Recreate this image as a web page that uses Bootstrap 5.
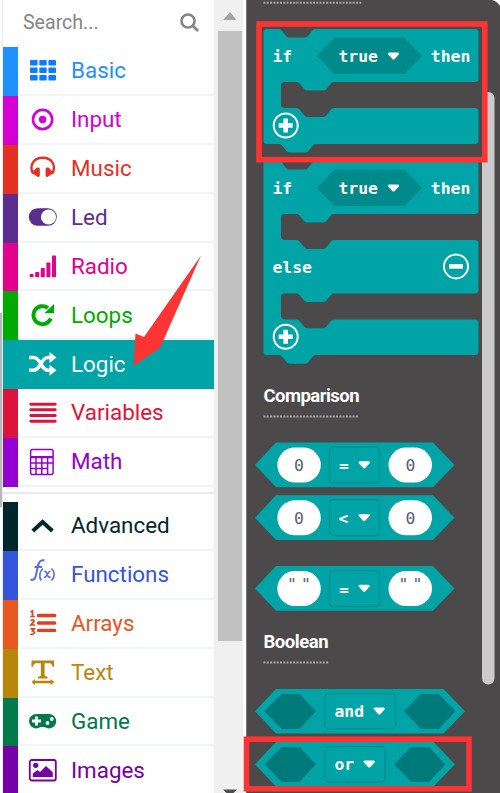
<!DOCTYPE html>
<html lang="en">
<head>
<meta charset="utf-8">
<meta name="viewport" content="width=device-width, initial-scale=1">
<title>Block editor toolbox</title>
<link href="https://cdn.jsdelivr.net/npm/bootstrap@5.3.0/dist/css/bootstrap.min.css" rel="stylesheet">
<style>
body{font-family:Roboto,sans-serif;background:#fff}
.editor{width:500px;height:793px}
.gutter{width:3px;background:#fbfcfc;border-right:1px solid #e6eeee}
.gutter i{display:block;width:2px;height:194px;margin-top:313px;background:#b4b9ba}
.toolbox{width:211px}
.searchbar{height:47px;padding:0 15px 3px 20px;color:#858585;font-size:20.6px}
.searchbar span{transform:scaleX(.95);transform-origin:0 50%}
.cat{height:48.9px;color:var(--c)}
.cat::before{content:"";width:15px;background:var(--c);align-self:stretch}
.cat .rowbody{border-bottom:2px solid #f0f4f5;margin-left:2px;height:100%}
.cat svg{width:30px;height:30px;margin-left:7px;overflow:visible}
.cat span{font-size:22.4px;line-height:1;margin-left:14px;white-space:nowrap}
.cat.selected{background:var(--c);color:#fff}
.cat.selected .rowbody{border-color:var(--c)}
.divide{height:15px;border-bottom:0}
.divide::before{content:"";display:block;height:2px;margin-top:5px;background:#e9ebeb}
.scroll{width:32px;background:#f0f0f0;padding-left:3.5px;border-right:3px solid #fff}
.thumb{width:24px;height:610px;background:#c1c1c1}
.flyout{width:254px;background:#4b4949;border-left:1px solid #777;overflow:hidden}
.flyout svg{display:block;margin-left:-1px;width:254px;flex:none}
.flyout text{font:bold 16.4px "DejaVu Sans Mono",monospace;fill:#fff}
.flyout text.num{font-weight:400;fill:#575e75}
.flyout text.label{font:bold 18.5px Roboto,sans-serif}
.b{fill:#00a4a6}.dk{fill:#008a8b}.slot{fill:#00797b}.w{fill:#fff}
.fld{fill:#00a4a6;stroke:#008f91;stroke-width:1.5}
.ring{fill:none;stroke:#fff;stroke-width:2}
.dots{stroke:#a9a9a9;stroke-width:2;stroke-dasharray:2 1.3}
.overlay{left:0;top:0;pointer-events:none}
</style>
<script src="https://cdn.jsdelivr.net/npm/bootstrap@5.3.0/dist/js/bootstrap.bundle.min.js"></script>
<style>
.c-basic{--c:#1e90ff}.c-input{--c:#d400d4}.c-music{--c:#e63022}.c-led{--c:#5c2d91}.c-radio{--c:#e3008c}.c-loops{--c:#00aa00}.c-logic{--c:#00a4a6}.c-vars{--c:#dc143c}.c-math{--c:#9400d3}.c-adv{--c:#00272b}.c-fn{--c:#3455db}.c-arr{--c:#e65722}.c-text{--c:#b8860b}.c-game{--c:#007a4b}.c-img{--c:#7600a8}
</style>
</head>
<body>
<div class="editor d-flex position-relative overflow-hidden">
<div class="gutter flex-shrink-0"><i></i></div>
<nav class="toolbox flex-shrink-0 d-flex flex-column">
<div class="searchbar d-flex align-items-center justify-content-between flex-shrink-0"><span>Search...</span>
<svg width="19" height="19" viewBox="0 0 19 19" fill="none" stroke="#858585" stroke-width="2.6"><circle cx="8" cy="8" r="6.5"/><path d="M12.5 12.5L18 18"/></svg></div>

<div class="cat c-basic d-flex flex-shrink-0"><div class="rowbody d-flex align-items-center flex-grow-1"><svg viewBox="0 0 30 30" fill="#0a7cff"><g id="r"><rect x="3" y="5" width="7.6" height="5.6" rx="1"/><rect x="12.3" y="5" width="7.4" height="5.6" rx="1"/><rect x="21.4" y="5" width="7.6" height="5.6" rx="1"/></g><use href="#r" y="7.5"/><use href="#r" y="15"/></svg><span>Basic</span></div></div>

<div class="cat c-input d-flex flex-shrink-0"><div class="rowbody d-flex align-items-center flex-grow-1"><svg viewBox="0 0 30 30" fill="currentColor"><circle cx="15.6" cy="15.5" r="9.6" fill="none" stroke="currentColor" stroke-width="2.6"/><circle cx="15.6" cy="15.5" r="3.7"/></svg><span>Input</span></div></div>

<div class="cat c-music d-flex flex-shrink-0"><div class="rowbody d-flex align-items-center flex-grow-1"><svg viewBox="0 0 30 30" fill="currentColor"><path d="M6 20.5C2.3 13.500 5.500 4.700 15.700 4.700S29 13.500 25.400 20.500" fill="none" stroke="currentColor" stroke-width="2.400"/><path d="M4.800 20L9.500 14.800Q12.800 14 12.800 16V22.500Q12.800 24.500 10.500 23.800ZM26.600 20L21.900 14.800Q18.600 14 18.600 16V22.500Q18.600 24.500 20.900 23.800Z"/></svg><span>Music</span></div></div>

<div class="cat c-led d-flex flex-shrink-0"><div class="rowbody d-flex align-items-center flex-grow-1"><svg viewBox="0 0 30 30"><rect x="1.800" y="6.200" width="28" height="17.600" rx="8.800" fill="currentColor"/><circle cx="21.500" cy="15" r="7.600" fill="#fff"/></svg><span>Led</span></div></div>

<div class="cat c-radio d-flex flex-shrink-0"><div class="rowbody d-flex align-items-center flex-grow-1"><svg viewBox="0 0 30 30" fill="currentColor"><rect x="2.600" y="23" width="4" height="3.200" rx="1"/><rect x="8.200" y="21" width="4" height="5.200" rx=".7"/><rect x="13.800" y="17" width="4" height="9.200" rx=".7"/><rect x="19.400" y="11.500" width="4" height="14.700" rx=".7"/><rect x="25" y="4.500" width="4" height="21.700" rx=".7"/></svg><span>Radio</span></div></div>

<div class="cat c-loops d-flex flex-shrink-0"><div class="rowbody d-flex align-items-center flex-grow-1"><svg viewBox="0 0 30 30"><path d="M23.800 18.500A9 9 0 1 1 21 8" fill="none" stroke="currentColor" stroke-width="3.900"/><path d="M27 4V13.200H17.300Z" fill="currentColor"/></svg><span>Loops</span></div></div>

<div class="cat c-logic selected d-flex flex-shrink-0"><div class="rowbody d-flex align-items-center flex-grow-1"><svg viewBox="0 0 30 30"><path d="M2 8.500H6.500C14 8.500 13.500 21.300 21 21.300H24M2 21.300H6.500C14 21.300 13.500 8.500 21 8.500H24" fill="none" stroke="#fff" stroke-width="3.600"/><path d="M22.500 3V14L29.500 8.500ZM22.500 15.800V26.800L29.500 21.300Z" fill="#fff"/></svg><span>Logic</span></div></div>

<div class="cat c-vars d-flex flex-shrink-0"><div class="rowbody d-flex align-items-center flex-grow-1"><svg viewBox="0 0 30 30"><path d="M3.800 6.200H28.200M3.800 11.800H28.200M3.800 17.500H28.200M3.800 23.200H28.200" stroke="currentColor" stroke-width="2.900" stroke-linecap="round"/></svg><span>Variables</span></div></div>

<div class="cat c-math d-flex flex-shrink-0"><div class="rowbody d-flex align-items-center flex-grow-1"><svg viewBox="0 0 30 30"><g fill="none" stroke="currentColor" stroke-width="1.500"><rect x="3.600" y="2.500" width="22.500" height="25" rx="2"/><path d="M4 10.500H26M4 16H26M4 21.500H21M9 10.500V27M14.800 10.500V27M20.600 10.500V27"/><path d="M4 10H26" stroke-width="2"/></g></svg><span>Math</span></div></div>

<div class="divide flex-shrink-0 d-flex flex-column"></div>

<div class="cat c-adv d-flex flex-shrink-0"><div class="rowbody d-flex align-items-center flex-grow-1"><svg viewBox="0 0 30 30"><path d="M5.800 21L15.600 12L25.400 21" fill="none" stroke="currentColor" stroke-width="4"/></svg><span>Advanced</span></div></div>

<div class="cat c-fn d-flex flex-shrink-0"><div class="rowbody d-flex align-items-center flex-grow-1"><svg viewBox="0 0 30 30" fill="none" stroke="#5570dc" stroke-width="1.600"><path d="M3.500 20.500C8.500 22.500 9 16 10.500 9Q12-.5 17.500 1.500M7.500 8H15" stroke-width="2"/><path d="M16 9.500Q10.500 15 14.200 21.500M24.500 9.500Q30 15 24.500 21.500M17.300 12.500C20.500 11 19.500 19.500 23.500 18M23.500 12C20.500 12 20 19 16.800 18.500"/></svg><span>Functions</span></div></div>

<div class="cat c-arr d-flex flex-shrink-0"><div class="rowbody d-flex align-items-center flex-grow-1"><svg viewBox="0 0 30 30"><g fill="none" stroke="#e0401a"><path d="M11.500 7.500H27.700M11.500 15H27.700M11.500 22.400H27.700" stroke-width="3.400" stroke-linecap="round"/><path d="M3.500 4L5.500 3V8.500M3.300 8.500H7.800M3.500 12.500Q7.500 11 7 13.500L3.800 17H8M3.500 20.800H7.300L5.500 23Q8 23.500 7 25.500Q5.500 27 3.300 26" stroke-width="1.700"/></g></svg><span>Arrays</span></div></div>

<div class="cat c-text d-flex flex-shrink-0"><div class="rowbody d-flex align-items-center flex-grow-1"><svg viewBox="0 0 30 30" fill="currentColor"><path d="M4.500 3.500H27V9.800H25.500Q25 6.500 22.500 6.300H17.600V18.300Q17.700 19.700 20.500 19.800V21.500H11V19.800Q13.800 19.700 13.900 18.300V6.300H9Q6.500 6.500 6 9.800H4.500Z"/><path d="M8 23.800H23.500V22L27.500 25L23.500 28V26.200H8V28L4.500 25L8 22Z"/></svg><span>Text</span></div></div>

<div class="cat c-game d-flex flex-shrink-0"><div class="rowbody d-flex align-items-center flex-grow-1"><svg viewBox="0 0 30 30"><path d="M9.500 8H22A7.200 7.200 0 1 1 17.700 21H13.500A7.200 7.200 0 1 1 9.500 8Z" fill="currentColor"/><path d="M5 15H14M9.500 10.500V19.500" stroke="#fff" stroke-width="2.800"/><circle cx="20.500" cy="17" r="1.900" fill="#fff"/><circle cx="24.800" cy="13" r="1.900" fill="#fff"/></svg><span>Game</span></div></div>

<div class="cat c-img d-flex flex-shrink-0"><div class="rowbody d-flex align-items-center flex-grow-1"><svg viewBox="0 0 30 30" fill="currentColor"><rect x="2.800" y="5" width="26" height="20.500" rx="2" fill="none" stroke="currentColor" stroke-width="1.800"/><circle cx="8.700" cy="10.300" r="2.600"/><path d="M5.800 22V18.500L10.500 15L13 17L19 11L25.800 17.500V22Z"/></svg><span>Images</span></div></div>
</nav>

<div class="scroll flex-shrink-0 d-flex flex-column">
<svg class="flex-shrink-0" width="24" height="31" viewBox="0 0 24 31"><path d="M5 20L12 12L18.500 20Z" fill="#a3a3a3"/></svg>
<div class="thumb flex-shrink-0"></div>
<svg class="mt-auto flex-shrink-0" width="24" height="4" viewBox="0 0 24 4"><path d="M5 .5H19L15.500 4H8.500Z" fill="#505050"/></svg>
</div>

<section class="flyout flex-shrink-0 d-flex flex-column">
<svg height="28" viewBox="246 0 254 28"><path class="dots" d="M263.500 2.700H362"/><path d="M492 0Q497 1 500 6V0Z" fill="#fff"/></svg>

<svg height="132" viewBox="246 28 254 132">
<path class="b" d="M267 29H279.500Q281.500 29.500 283 32L286 36Q287.500 37.500 289 37.500H304.500Q306.500 37.500 308 36L312 31Q313.500 29 315.500 29H475Q478.500 29 478.500 32.500V78.500Q478.500 82 475 82H334Q332 82 330.500 84L326.500 89Q325 90.500 323 90.500H307.500Q305.500 90.500 304 89L300 84Q298.500 82 296.500 82H285Q281 82 281 86V104Q281 108 285 108H296.500Q298.500 108 300 110L304 115Q305.500 117 307.500 117H323Q325 117 326.500 115L330.500 110Q332 108 334 108H475Q478.500 108 478.500 111.500V140.500Q478.500 144 475 144H316Q314 144 312.500 146L308.500 151Q307 152.500 305 152.500H290Q288 152.500 286.500 151L282.500 146Q281 144 279 144H267Q263.500 144 263.500 140.500V32.500Q263.500 29 267 29Z"/>
<path class="dk" d="M316.500 56L334.500 37.500H404.500L422.500 56L404.500 74H334.500Z"/>
<text x="272.500" y="62">if</text><text x="338.500" y="62">true</text><text x="430.800" y="62">then</text>
<path id="tri" class="w" d="M389 52.500H398Q400 53 398.800 54.500L394.500 59.200Q393.500 60 392.500 59.200L388.200 54.500Q387 53 389 52.500Z"/>
<g id="plus"><circle class="ring" cx="285.700" cy="125.500" r="12"/><path d="M278.700 125.500H292.700M285.700 118.500V132.500" stroke="#fff" stroke-width="4.600"/></g>
</svg>

<svg height="220" viewBox="246 160 254 220">
<path class="b" d="M267 161H279.500Q281.500 161.500 283 164L286 168Q287.500 169.500 289 169.500H304.500Q306.500 169.500 308 168L312 163Q313.500 161 315.500 161H475Q478.500 161 478.500 164.500V210.500Q478.500 214 475 214H334Q332 214 330.500 216L326.500 221Q325 222.500 323 222.500H307.500Q305.500 222.500 304 221L300 216Q298.500 214 296.500 214H285Q281 214 281 218V236Q281 240 285 240H296.500Q298.500 240 300 242L304 247Q305.500 249 307.500 249H323Q325 249 326.500 247L330.500 242Q332 240 334 240H475Q478.500 240 478.500 243.500V290Q478.500 293.500 475 293.500H334Q332 293.500 330.500 295.500L326.500 300.500Q325 302 323 302H307.500Q305.500 302 304 300.500L300 295.500Q298.500 293.500 296.500 293.500H285Q281 293.500 281 297.500V315.500Q281 319.500 285 319.500H296.500Q298.500 319.500 300 321.500L304 326.500Q305.500 328.300 307.500 328.300H323Q325 328.300 326.500 326.500L330.500 321.500Q332 319.500 334 319.500H475Q478.500 319.500 478.500 323V351.500Q478.500 355 475 355H316Q314 355 312.500 357L308.500 362Q307 363.700 305 363.700H290Q288 363.700 286.500 362L282.500 357Q281 355 279 355H267Q263.500 355 263.500 351.500V164.500Q263.500 161 267 161Z"/>
<path class="dk" d="M316.500 188L334.500 169.500H404.500L422.500 188L404.500 206H334.500Z"/>
<text x="272.500" y="194">if</text><text x="338.500" y="194">true</text><text x="430.800" y="194">then</text><text x="272.500" y="273">else</text>
<use href="#tri" y="132"/><use href="#plus" y="211.300"/>
<circle class="ring" cx="456" cy="266.400" r="12"/><path d="M449 266.400H463" stroke="#fff" stroke-width="4.600"/>
</svg>

<svg height="60" viewBox="246 380 254 60"><text class="label" x="263.500" y="402" textLength="96">Comparison</text><path class="dots" d="M263.500 416.500H359"/></svg>

<svg height="52" viewBox="246 440 254 52">
<g id="cmp"><path class="b" d="M255 465L276 442.500H433L454.500 465L433 487.300H276Z"/><rect class="w" x="277.300" y="447.500" width="43.500" height="35" rx="17.500"/><rect class="w" x="388.500" y="447.500" width="43.500" height="35" rx="17.500"/><rect class="fld" x="329.500" y="447" width="50" height="36" rx="4"/><use href="#tri" x="-29.300" y="408.800"/></g>
<text class="num" x="294" y="470.500">0</text><text class="num" x="405.500" y="470.500">0</text><text x="339" y="471">=</text>
</svg>
<svg height="58" viewBox="246 492 254 58"><use href="#cmp" y="52.800"/><text class="num" x="294" y="523.500">0</text><text class="num" x="405.500" y="523.500">0</text><text x="338.500" y="524">&lt;</text></svg>
<svg height="70" viewBox="246 550 254 70"><use href="#cmp" y="123.500"/><text class="num" x="287" y="590">"</text><text class="num" x="301" y="590">"</text><text class="num" x="398.500" y="590">"</text><text class="num" x="412.500" y="590">"</text><text x="339" y="594.500">=</text></svg>

<svg height="60" viewBox="246 620 254 60"><text class="label" x="263.500" y="647.500" textLength="65">Boolean</text><path class="dots" d="M263.500 662.500H328.500"/></svg>

<svg height="58" viewBox="246 680 254 58"><path class="b" d="M255 711.300L276 689H443.500L465 711.300L443.500 733.500H276Z"/><path id="hx" class="slot" d="M264.500 711.300L281.500 694H299.500L316 711.300L299.500 729H281.500Z"/><use href="#hx" x="139.500"/><rect class="fld" x="325" y="693.500" width="70.500" height="35.500" rx="4"/><text x="334.500" y="716.500">and</text><use href="#tri" x="-14.300" y="655"/></svg>
<svg height="55" viewBox="246 738 254 55"><path class="b" d="M255 764.300L276 742H433.500L455 764.300L433.500 786.500H276Z"/><use href="#hx" y="53"/><use href="#hx" x="129.500" y="53"/><rect class="fld" x="325" y="746.500" width="60" height="35.500" rx="4"/><text x="334.500" y="769.500">or</text><use href="#tri" x="-24.300" y="708"/></svg>
</section>

<svg class="overlay position-absolute" width="500" height="793" viewBox="0 0 500 793">
<rect x="482" y="92" width="12.500" height="592.500" rx="6" fill="#cbcbcb"/>
<g fill="none" stroke="#fd3434" stroke-width="5.600"><rect x="259" y="24" width="225.800" height="135.700"/><rect x="246.500" y="739.200" width="222.500" height="49.600"/></g>
<path d="M201 255.500L160 348L133.500 366L135.500 333.500L144 337Z" fill="#fd3434"/>
</svg>
</div>
</body>
</html>
